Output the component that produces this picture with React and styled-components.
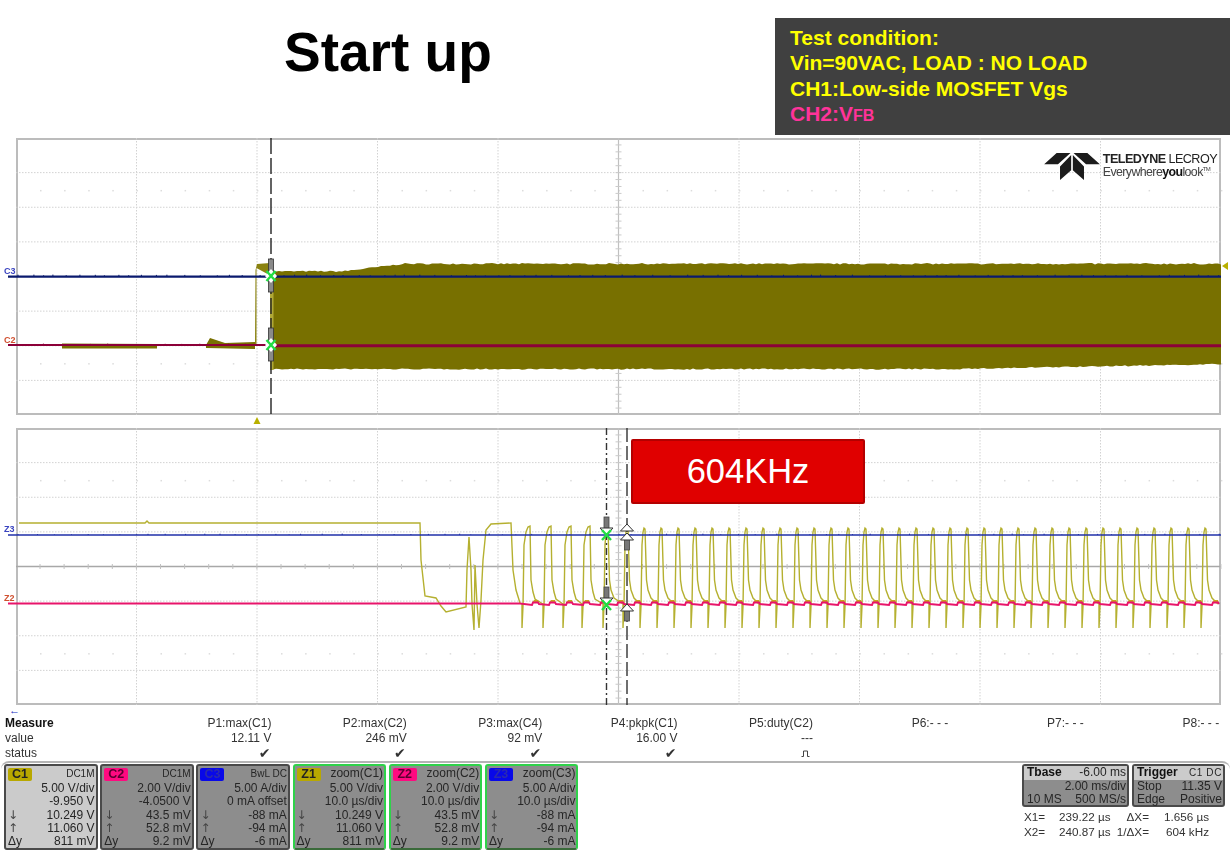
import styled, { createGlobalStyle } from 'styled-components';

const GlobalStyle = createGlobalStyle`
  html, body {
    margin: 0;
    background: #fff;
    font-family: 'Liberation Sans', Arial, sans-serif;
  }
`;

// Trace geometry is in page pixels, each plot svg has a viewBox at its page position
let seed = 7;
const rand = () => {
  seed = (seed * 16807) % 2147483647;
  return seed / 2147483647;
};

const PLOT_LEFT = 16;
const PLOT_WIDTH = 1205;
const PLOT_HEIGHT = 277;
const TOP_PLOT = 138;
const BOTTOM_PLOT = 428;

const envelope = () => {
  const top = [], bottom = [];
  for (let x = 273; x <= 1221; x += 3) {
    let t = 264.5;
    if (x < 343) t = 272;
    else if (x < 400) t = 272 - ((x - 343) / 57) * 7;
    let b = 368.5;
    if (x > 950) b = 368.5 - ((x - 950) / 270) * 5;
    top.push(`${x},${(t - rand() * 1.4).toFixed(1)}`);
    bottom.unshift(`${x},${(b + rand() * 1.2).toFixed(1)}`);
  }
  return `M${top.join(' L')} L${bottom.join(' L')} Z`;
};

const speckle = (y, from, to, step) => {
  let d = '';
  for (let x = from; x < to; x += step + rand() * step) {
    d += `M${x.toFixed(1)},${y} v-${(0.6 + rand() * 0.8).toFixed(1)} `;
  }
  return d;
};

const widePulse = (x0, w) =>
  `M${x0},604 L${x0},628 L${x0 + 1},606 L${x0 + 2},545 L${x0 + 4},532 L${x0 + 6},527 L${x0 + 8},526 ` +
  `L${x0 + 9},580 L${x0 + 11},592 L${x0 + 13},599 L${x0 + w},604`;

const narrowPulse = (x0, w) =>
  `M${x0},604 L${x0},628 L${x0 + 1},606 L${x0 + 2},545 L${x0 + 3},532 L${x0 + 4},528 L${x0 + 5},529 ` +
  `L${x0 + 6.5},580 L${x0 + 8},590 L${x0 + 11},598 L${x0 + w},604`;

const zoomTrace = () => {
  let d =
    'M19,523 L145,523 L147,521 L149,523 L420,523 L421,560 L425,596 L436,598 L441,606 L446,612 L466,607 ' +
    'L467,570 L469,537 L471,570 L472,604 L474,630 L475,565 L477,604 L479,628 L481,600 L483,560 L486,530 L491,524 L511,523 ' +
    'L513,570 L516,590 L520,603 ';
  const heads = [522, 543, 563, 582];
  heads.forEach((x, i) => {
    d += widePulse(x, (heads[i + 1] || 603) - x) + ' ';
  });
  d += narrowPulse(603, 20) + ' ';
  for (let x = 623; x < 1212; x += 17) {
    d += narrowPulse(Math.round(x), 17) + ' ';
  }
  return d;
};

const pinkSteps = () => {
  let d = 'M16,603.5 L520,603.5 ';
  for (let x = 522; x < 1204; x += 17) {
    d += `L${x + 10},605 L${x + 11},602.5 L${x + 16},602.5 L${x + 17},604 `;
  }
  return d;
};

const bumps = () => {
  let d = '';
  for (let x = 522; x < 1204; x += 17) {
    d += `M${x + 10},603 L${x + 12},600 L${x + 16},600 L${x + 17},603 `;
  }
  return d;
};

const ENVELOPE = envelope();
const ZOOM_TRACE = zoomTrace();
const PINK = pinkSteps();
const BUMPS = bumps();
const NOISE_C3 = speckle(276, 18, 1220, 9);
const NOISE_C2 = speckle(345, 18, 260, 10);
const NOISE_Z3 = speckle(535, 18, 1220, 11);

const PlotGrid = ({ top, centerLine }) => {
  const rowStep = PLOT_HEIGHT / 8;
  const colStep = PLOT_WIDTH / 10;
  const rows = [1, 2, 3, 5, 6, 7].map((i) => top + i * rowStep);
  const cols = [1, 2, 3, 4, 6, 7, 8, 9].map((i) => PLOT_LEFT + i * colStep);
  const cx = PLOT_LEFT + 5 * colStep;
  const cy = top + 4 * rowStep;
  const dots = [];
  for (let x = PLOT_LEFT + 24; x < PLOT_LEFT + PLOT_WIDTH; x += 24.1) dots.push(x);
  const vTicks = [];
  for (let i = 1; i < 40; i++) vTicks.push(top + i * (PLOT_HEIGHT / 40));
  return (
    <g>
      {rows.map((y) => (
        <line key={y} x1={PLOT_LEFT} x2={PLOT_LEFT + PLOT_WIDTH} y1={y} y2={y} stroke="#d2d2d2" strokeWidth="1" strokeDasharray="1.5 1.5" />
      ))}
      {cols.map((x) => (
        <line key={x} x1={x} x2={x} y1={top} y2={top + PLOT_HEIGHT} stroke="#d2d2d2" strokeWidth="1" strokeDasharray="1.5 1.5" />
      ))}
      {[1.5, 6.5].map((r) =>
        dots.map((x) => <rect key={`${r}-${x}`} x={x} y={top + r * rowStep} width="1.5" height="1.5" fill="#dcdcdc" />)
      )}
      <line x1={cx} x2={cx} y1={top} y2={top + PLOT_HEIGHT} stroke="#c0c0c0" strokeWidth="1.2" />
      {vTicks.map((y) => (
        <line key={y} x1={cx - 3} x2={cx + 3} y1={y} y2={y} stroke="#cacaca" />
      ))}
      {centerLine && <line x1={PLOT_LEFT} x2={PLOT_LEFT + PLOT_WIDTH} y1={cy} y2={cy} stroke="#a8a8a8" strokeWidth="1.5" />}
      {centerLine && dots.map((x) => (
        <line key={x} x1={x} x2={x} y1={cy - 2.5} y2={cy + 2.5} stroke="#c0c0c0" />
      ))}
    </g>
  );
};

const GreenX = ({ x, y }) => (
  <path d={`M${x - 4.5},${y - 5} L${x + 4.5},${y + 5} M${x + 4.5},${y - 5} L${x - 4.5},${y + 5}`} stroke="#22dd44" strokeWidth="2.4" />
);

const RodMarker = ({ x, y }) => (
  <g>
    <rect x={x - 2.5} y={y - 17} width="5" height="33" fill="#8a8a8a" stroke="#333" strokeWidth="0.8" />
    <path d={`M${x},${y - 7} L${x + 6},${y} L${x},${y + 7} L${x - 6},${y} Z`} fill="#fff" />
    <GreenX x={x} y={y} />
  </g>
);

const DownMarker = ({ x, y }) => (
  <g>
    <rect x={x - 2.5} y={y - 18} width="5" height="12" fill="#777" stroke="#444" strokeWidth="0.8" />
    <path d={`M${x - 6.5},${y - 7} L${x + 6.5},${y - 7} L${x},${y} Z`} fill="#fff" stroke="#333" strokeWidth="1" />
    <GreenX x={x} y={y} />
  </g>
);

const UpMarker = ({ x, y, rod = true }) => (
  <g>
    {rod && <rect x={x - 2.5} y={y + 6} width="5" height="11" fill="#777" stroke="#444" strokeWidth="0.8" />}
    <path d={`M${x},${y} L${x + 6.5},${y + 7} L${x - 6.5},${y + 7} Z`} fill="#fff" stroke="#333" strokeWidth="1" />
  </g>
);

const Page = styled.div`
  width: 1230px;
  height: 851px;
  overflow: hidden;
  display: flex;
  flex-direction: column;
`;

const Header = styled.header`
  height: 138px;
  display: flex;
  align-items: flex-start;
`;

const Title = styled.h1`
  margin: 20px 0 0 284px;
  font-size: 55px;
  line-height: 64px;
  font-weight: 700;
  color: #000;
`;

const ConditionBox = styled.div`
  margin: 18px 0 0 auto;
  width: 455px;
  height: 117px;
  box-sizing: border-box;
  padding: 7px 0 0 15px;
  background: #404040;
  font-size: 21px;
  line-height: 25.4px;
  font-weight: 700;
  color: #ffff00;
`;

const ConditionLine = styled.div`
  color: ${(p) => p.$color || '#ffff00'};
  white-space: pre;
`;

const SmallCaps = styled.span`
  font-size: 16px;
`;

const Plots = styled.section`
  display: flex;
  flex-direction: column;
  gap: 13px;
  padding-left: ${PLOT_LEFT}px;
  filter: blur(0.45px);
`;

const Plot = styled.div`
  position: relative;
  width: ${PLOT_WIDTH}px;
  height: ${PLOT_HEIGHT}px;
  box-shadow: inset 0 0 0 2px #bcbcbc;
`;

const PlotSvg = styled.svg`
  display: block;
  width: 100%;
  height: 100%;
  overflow: visible;
`;

const TraceLabel = styled.span`
  position: absolute;
  left: -12px;
  top: ${(p) => p.$top}px;
  font-size: 9px;
  line-height: 10px;
  font-weight: 700;
  color: ${(p) => p.$color};
`;

const Logo = styled.div`
  position: absolute;
  right: 4px;
  top: 15px;
  display: flex;
  align-items: flex-start;
  gap: 3px;
`;

const LogoText = styled.div`
  display: flex;
  flex-direction: column;
  color: #222;
`;

const LogoName = styled.span`
  font-size: 12.6px;
  line-height: 13px;
  letter-spacing: -0.55px;
  font-weight: 700;
  b {
    font-weight: 400;
  }
`;

const LogoTag = styled.span`
  font-size: 12.4px;
  line-height: 13px;
  letter-spacing: -0.6px;
  color: #444;
  b {
    color: #111;
  }
  sup {
    font-size: 6px;
    line-height: 0;
  }
`;

const FrequencyBadge = styled.div`
  position: absolute;
  left: 615px;
  top: 11px;
  width: 234px;
  height: 65px;
  box-sizing: border-box;
  display: flex;
  align-items: center;
  justify-content: center;
  background: #e00000;
  border: 2px solid #b40000;
  border-radius: 2px;
  color: #fff;
  font-size: 34.5px;
`;

const BackArrow = styled.div`
  height: 11px;
  padding: 0 0 0 9px;
  font-size: 11px;
  line-height: 10px;
  font-weight: 700;
  color: #2030c0;
`;

const Measure = styled.section`
  display: grid;
  grid-template-columns: 136px repeat(8, 135.4px);
  grid-auto-rows: 15px;
  font-size: 12px;
  line-height: 15px;
  color: #333;
  filter: blur(0.3px);
`;

const RowLabel = styled.div`
  padding-left: 5px;
  font-weight: ${(p) => (p.$bold ? 700 : 400)};
  color: ${(p) => (p.$bold ? '#111' : '#333')};
`;

const Cell = styled.div`
  text-align: right;
  white-space: pre;
`;

const Check = styled.span`
  font-family: 'DejaVu Sans', sans-serif;
  font-size: 14px;
  padding-right: 1px;
  color: #333;
`;

const PulseIcon = styled.svg`
  width: 9px;
  height: 9px;
  margin: 3px 3px 0 0;
`;

const Footer = styled.footer`
  flex: 1;
  margin: 0 0 0 1px;
  padding: 1px 5px 0 3px;
  display: flex;
  justify-content: space-between;
  border-top: 2px solid #b4b4b4;
  border-top-left-radius: 8px;
  border-top-right-radius: 8px;
  filter: blur(0.3px);
`;

const Tiles = styled.div`
  display: flex;
  gap: 2.7px;
`;

const Tile = styled.div`
  width: 93.5px;
  height: 86px;
  box-sizing: border-box;
  padding: 1px 1px 0 2px;
  background: ${(p) => (p.$active ? '#cbcbcb' : '#8d8d8d')};
  border: 2px solid ${(p) => (p.$zoom ? '#2fd24a' : '#4a4a4a')};
  border-bottom-color: ${(p) => (p.$zoom ? '#3a6a3a' : '#4a4a4a')};
  border-radius: 3px;
  color: #262626;
  font-size: 12px;
  line-height: 13.3px;
`;

const TileHead = styled.div`
  height: 15px;
  display: flex;
  justify-content: space-between;
  align-items: flex-start;
  font-size: ${(p) => (p.$zoom ? 12 : 10)}px;
`;

const Chip = styled.span`
  width: 24px;
  height: 13px;
  margin-top: 1px;
  display: block;
  text-align: center;
  font-size: 12.5px;
  line-height: 13px;
  font-weight: 700;
  background: ${(p) => p.$color};
  color: ${(p) => p.$text};
  border-radius: 2px;
`;

const TileRow = styled.div`
  display: flex;
  justify-content: space-between;
  white-space: pre;
`;

const Arrow = styled.span`
  font-family: 'DejaVu Sans', sans-serif;
  color: #444;
  font-size: 12px;
  line-height: 13px;
`;

const Readouts = styled.div`
  display: flex;
  flex-direction: column;
`;

const Timebase = styled.div`
  display: flex;
  gap: 3px;
`;

const TimeBox = styled.div`
  width: ${(p) => p.$width}px;
  height: 43px;
  box-sizing: border-box;
  background: #8d8d8d;
  border: 2px solid #4a4a4a;
  border-radius: 3px;
  color: #262626;
  font-size: 12px;
  line-height: 13px;
`;

const TimeHead = styled.div`
  height: 14px;
  padding: 0 1px 0 3px;
  display: flex;
  justify-content: space-between;
  background: #cbcbcb;
  font-weight: 400;
  b {
    color: #111;
  }
`;

const SmallTag = styled.span`
  font-size: 10px;
  letter-spacing: 0.6px;
`;

const TimeRow = styled.div`
  padding: 0 1px 0 3px;
  display: flex;
  justify-content: space-between;
`;

const CursorGrid = styled.div`
  margin: 2px 0 0 2px;
  display: grid;
  grid-template-columns: 35px 54px 36px 60px;
  grid-auto-rows: 15px;
  font-size: 11.7px;
  line-height: 15px;
  color: #333;
  white-space: nowrap;
`;

const CursorRight = styled.span`
  text-align: right;
  white-space: pre;
`;

const MEASURES = [
  { name: 'P1:max(C1)', value: '12.11 V', ok: true },
  { name: 'P2:max(C2)', value: '246 mV', ok: true },
  { name: 'P3:max(C4)', value: '92 mV', ok: true },
  { name: 'P4:pkpk(C1)', value: '16.00 V', ok: true },
  { name: 'P5:duty(C2)', value: '---', pulse: true },
  { name: 'P6:- - -' },
  { name: 'P7:- - -' },
  { name: 'P8:- - -' },
];

const OLIVE = '#b8a800';
const PINK_CHIP = '#ff0a80';
const BLUE_CHIP = '#0808e8';

const TILES = [
  { id: 'C1', color: OLIVE, text: '#222', active: true, head: 'DC1M', rows: ['5.00 V/div', '-9.950 V', '10.249 V', '11.060 V', '811 mV'] },
  { id: 'C2', color: PINK_CHIP, text: '#5a0030', head: 'DC1M', rows: ['2.00 V/div', '-4.0500 V', '43.5 mV', '52.8 mV', '9.2 mV'] },
  { id: 'C3', color: BLUE_CHIP, text: '#2a2ab0', head: 'BwL  DC', rows: ['5.00 A/div', '0 mA offset', '-88 mA', '-94 mA', '-6 mA'] },
  { id: 'Z1', color: OLIVE, text: '#222', zoom: true, head: 'zoom(C1)', rows: ['5.00 V/div', '10.0 µs/div', '10.249 V', '11.060 V', '811 mV'] },
  { id: 'Z2', color: PINK_CHIP, text: '#5a0030', zoom: true, head: 'zoom(C2)', rows: ['2.00 V/div', '10.0 µs/div', '43.5 mV', '52.8 mV', '9.2 mV'] },
  { id: 'Z3', color: BLUE_CHIP, text: '#2a2ab0', zoom: true, head: 'zoom(C3)', rows: ['5.00 A/div', '10.0 µs/div', '-88 mA', '-94 mA', '-6 mA'] },
];

const ChannelTile = ({ id, color, text, active, zoom, head, rows }) => (
  <Tile $active={active} $zoom={zoom}>
    <TileHead $zoom={zoom}>
      <Chip $color={color} $text={text}>{id}</Chip>
      <span>{head}</span>
    </TileHead>
    <TileRow><span />{rows[0]}</TileRow>
    <TileRow><span />{rows[1]}</TileRow>
    <TileRow><Arrow>↓</Arrow>{rows[2]}</TileRow>
    <TileRow><Arrow>↑</Arrow>{rows[3]}</TileRow>
    <TileRow><span>Δy</span>{rows[4]}</TileRow>
  </Tile>
);

const TopPlot = () => (
  <Plot>
    <PlotSvg viewBox={`${PLOT_LEFT} ${TOP_PLOT} ${PLOT_WIDTH} ${PLOT_HEIGHT}`}>
      <PlotGrid top={TOP_PLOT} />
      <path d={ENVELOPE} fill="#787000" />
      <path d="M62,343.5 L157,344 L157,348.5 L62,348.5 Z" fill="#787000" />
      <path d="M206,345 L210,338 L216,340 L225,343 L255,342 L255,349 L206,348 Z" fill="#787000" />
      <path d="M255,345 L255.5,270 L257,264 L270,263 L273,272 L273,277 L256.5,268 L256.5,345 Z" fill="#8a8210" />
      <rect x="270" y="272" width="3.5" height="98" fill="#b0a838" />
      <path d={NOISE_C3} stroke="#0a1a6e" strokeWidth="1" />
      <path d={NOISE_C2} stroke="#8c0038" strokeWidth="1" />
      <line x1="8" x2="1221" y1="276.6" y2="276.6" stroke="#0a1a6e" strokeWidth="2.4" />
      <line x1="8" x2="270" y1="345" y2="345" stroke="#8c0038" strokeWidth="2" />
      <line x1="270" x2="1221" y1="345.8" y2="345.8" stroke="#8c0038" strokeWidth="3" />
      <line x1="271" x2="271" y1="138" y2="415" stroke="#222" strokeWidth="1.4" strokeDasharray="16 4" />
      <RodMarker x={271} y={276} />
      <RodMarker x={271} y={345} />
      <path d="M257,417 L253.5,424 L260.5,424 Z" fill="#b8b000" />
      <path d="M1222,266 L1228,262 L1228,270 Z" fill="#b8b000" />
    </PlotSvg>
    <TraceLabel $top={128} $color="#3a44c0">C3</TraceLabel>
    <TraceLabel $top={197} $color="#d05030">C2</TraceLabel>
    <Logo>
      <svg viewBox="125 70 165 80" width="56" height="27">
        <path d="M125,103 L162,70 L203,70 L166,103 Z M290,103 L253,70 L212,70 L249,103 Z" fill="#1c1c1c" />
        <path d="M205,76 L172,110 L172,150 L205,121 Z M210,76 L243,110 L243,150 L210,121 Z" fill="#1c1c1c" />
      </svg>
      <LogoText>
        <LogoName>TELEDYNE <b>LECROY</b></LogoName>
        <LogoTag>Everywhere<b>you</b>look<sup>TM</sup></LogoTag>
      </LogoText>
    </Logo>
  </Plot>
);

const BottomPlot = () => (
  <Plot>
    <PlotSvg viewBox={`${PLOT_LEFT} ${BOTTOM_PLOT} ${PLOT_WIDTH} ${PLOT_HEIGHT}`}>
      <PlotGrid top={BOTTOM_PLOT} centerLine />
      <path d={ZOOM_TRACE} fill="none" stroke="#b5b030" strokeWidth="1.4" />
      <path d={BUMPS} fill="#c8a020" />
      <path d={NOISE_Z3} stroke="#1f2fa8" strokeWidth="1" />
      <line x1="8" x2="1221" y1="535" y2="535" stroke="#1f2fa8" strokeWidth="1.4" />
      <path d={PINK} fill="none" stroke="#e8146a" strokeWidth="2" />
      <line x1="8" x2="16" y1="603.5" y2="603.5" stroke="#e8146a" strokeWidth="2" />
      <line x1="606.5" x2="606.5" y1="428" y2="705" stroke="#333" strokeWidth="1.4" strokeDasharray="7 3 2 3" />
      <line x1="627" x2="627" y1="428" y2="705" stroke="#333" strokeWidth="1.4" strokeDasharray="14 4" />
      <DownMarker x={606.5} y={535} />
      <DownMarker x={606.5} y={605} />
      <UpMarker x={627} y={524} rod={false} />
      <UpMarker x={627} y={533} />
      <UpMarker x={627} y={604} />
    </PlotSvg>
    <TraceLabel $top={96} $color="#3a44c0">Z3</TraceLabel>
    <TraceLabel $top={165} $color="#d05030">Z2</TraceLabel>
    <FrequencyBadge>604KHz</FrequencyBadge>
  </Plot>
);

export default function App() {
  return (
    <Page>
      <GlobalStyle />
      <Header>
        <Title>Start up</Title>
        <ConditionBox>
          <ConditionLine>Test condition:</ConditionLine>
          <ConditionLine>Vin=90VAC, LOAD : NO LOAD</ConditionLine>
          <ConditionLine>CH1:Low-side MOSFET Vgs</ConditionLine>
          <ConditionLine $color="#ff3399">CH2:V<SmallCaps>FB</SmallCaps></ConditionLine>
        </ConditionBox>
      </Header>
      <Plots>
        <TopPlot />
        <BottomPlot />
      </Plots>
      <BackArrow>←</BackArrow>
      <Measure>
        <RowLabel $bold>Measure</RowLabel>
        {MEASURES.map((m) => <Cell key={m.name}>{m.name}</Cell>)}
        <RowLabel>value</RowLabel>
        {MEASURES.map((m) => <Cell key={m.name}>{m.value}</Cell>)}
        <RowLabel>status</RowLabel>
        {MEASURES.map((m) => (
          <Cell key={m.name}>
            {m.ok && <Check>✔</Check>}
            {m.pulse && (
              <PulseIcon viewBox="0 0 9 9">
                <path d="M0.5,7.5 H2.5 V2 H6.5 V7.5 H8.5" fill="none" stroke="#444" strokeWidth="1" />
              </PulseIcon>
            )}
          </Cell>
        ))}
      </Measure>
      <Footer>
        <Tiles>
          {TILES.map((t) => <ChannelTile key={t.id} {...t} />)}
        </Tiles>
        <Readouts>
          <Timebase>
            <TimeBox $width={107}>
              <TimeHead><b>Tbase</b><span>-6.00 ms</span></TimeHead>
              <TimeRow><span />2.00 ms/div</TimeRow>
              <TimeRow><span>10 MS</span><span>500 MS/s</span></TimeRow>
            </TimeBox>
            <TimeBox $width={93}>
              <TimeHead><b>Trigger</b><SmallTag>C1 DC</SmallTag></TimeHead>
              <TimeRow><span>Stop</span><span>11.35 V</span></TimeRow>
              <TimeRow><span>Edge</span><span>Positive</span></TimeRow>
            </TimeBox>
          </Timebase>
          <CursorGrid>
            <span>X1=</span><span>239.22 µs</span><CursorRight>ΔX=</CursorRight><CursorRight>1.656 µs</CursorRight>
            <span>X2=</span><span>240.87 µs</span><CursorRight>1/ΔX=</CursorRight><CursorRight>604 kHz</CursorRight>
          </CursorGrid>
        </Readouts>
      </Footer>
    </Page>
  );
}
